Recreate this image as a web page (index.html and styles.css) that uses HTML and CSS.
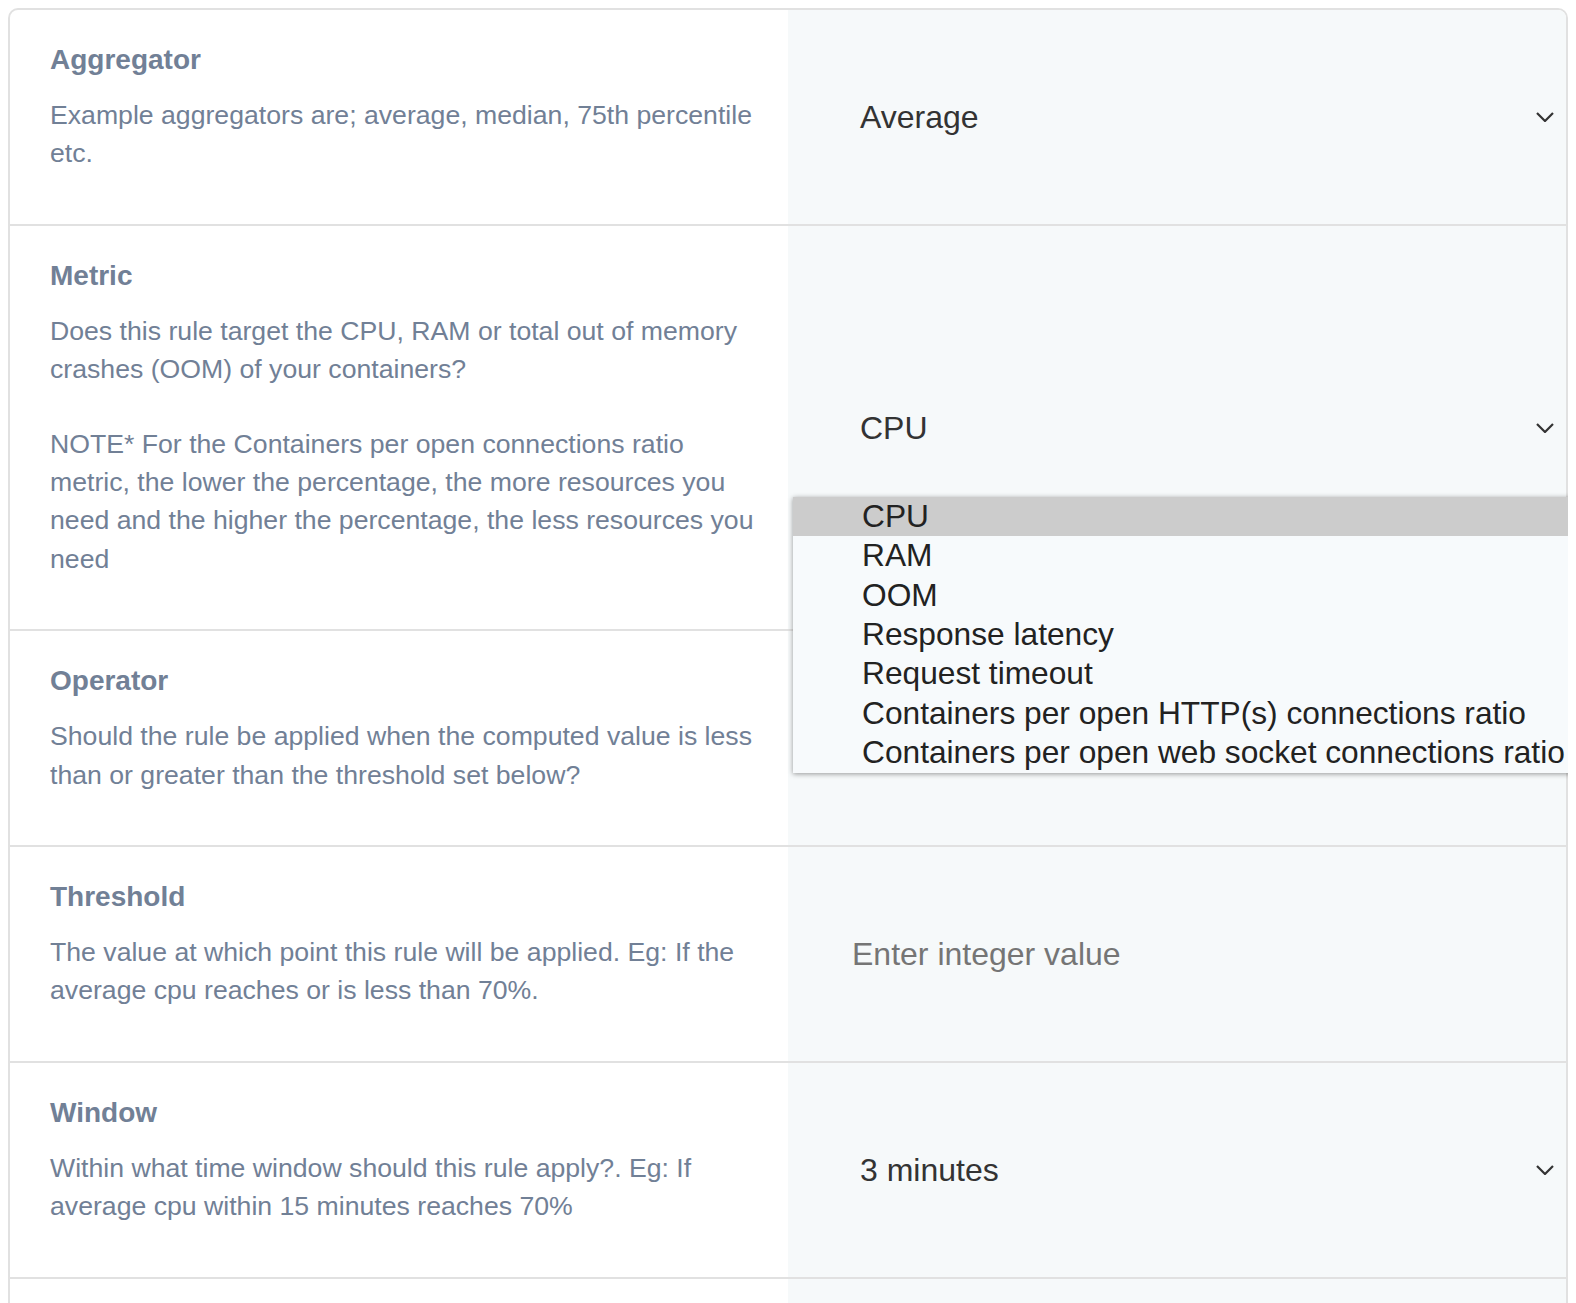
FILE: index.html
```html
<!DOCTYPE html>
<html lang="en">
<head>
<meta charset="utf-8">
<title>Scaling rule</title>
<link rel="stylesheet" href="styles.css">
</head>
<body>
<div class="card">
  <div class="row">
    <div class="info">
      <div class="label">Aggregator</div>
      <p class="desc">Example aggregators are; average, median, 75th percentile etc.</p>
    </div>
    <div class="control first">
      <div class="select"><span>Average</span><svg class="chev" width="18" height="10" viewBox="0 0 18 10"><path d="M1 1 L9 9 L17 1" fill="none" stroke="#333" stroke-width="2.2"/></svg></div>
    </div>
  </div>
  <div class="row">
    <div class="info">
      <div class="label">Metric</div>
      <p class="desc">Does this rule target the CPU, RAM or total out of memory crashes (OOM) of your containers?</p>
      <p class="desc note">NOTE* For the Containers per open connections ratio metric, the lower the percentage, the more resources you need and the higher the percentage, the less resources you need</p>
    </div>
    <div class="control">
      <div class="select"><span>CPU</span><svg class="chev" width="18" height="10" viewBox="0 0 18 10"><path d="M1 1 L9 9 L17 1" fill="none" stroke="#333" stroke-width="2.2"/></svg></div>
      <ul class="popup">
        <li class="active">CPU</li>
        <li>RAM</li>
        <li>OOM</li>
        <li>Response latency</li>
        <li>Request timeout</li>
        <li>Containers per open HTTP(s) connections ratio</li>
        <li>Containers per open web socket connections ratio</li>
      </ul>
    </div>
  </div>
  <div class="row">
    <div class="info">
      <div class="label">Operator</div>
      <p class="desc">Should the rule be applied when the computed value is less than or greater than the threshold set below?</p>
    </div>
    <div class="control"></div>
  </div>
  <div class="row">
    <div class="info">
      <div class="label">Threshold</div>
      <p class="desc">The value at which point this rule will be applied. Eg: If the average cpu reaches or is less than 70%.</p>
    </div>
    <div class="control">
      <input class="input" type="text" placeholder="Enter integer value">
    </div>
  </div>
  <div class="row">
    <div class="info">
      <div class="label">Window</div>
      <p class="desc">Within what time window should this rule apply?. Eg: If average cpu within 15 minutes reaches 70%</p>
    </div>
    <div class="control">
      <div class="select"><span>3 minutes</span><svg class="chev" width="18" height="10" viewBox="0 0 18 10"><path d="M1 1 L9 9 L17 1" fill="none" stroke="#333" stroke-width="2.2"/></svg></div>
    </div>
  </div>
  <div class="row last">
    <div class="info"></div>
    <div class="control"></div>
  </div>
</div>
</body>
</html>
```

FILE: styles.css
```css
* { box-sizing: border-box; }

html { overflow: hidden; }

body {
  margin: 8px;
  background: #ffffff;
  font-family: "Liberation Sans", Arial, sans-serif;
}

.card {
  border: 2px solid #e1e1e1;
  border-radius: 10px;
  background: #ffffff;
}

.row {
  display: grid;
  grid-template-columns: 1fr 1fr;
  border-bottom: 2px solid #e1e1e1;
}

.row.last {
  min-height: 215px;
  border-bottom: none;
}

.info {
  padding: 29px 26px 51px 40px;
}

.label {
  font-size: 28px;
  line-height: 42px;
  font-weight: bold;
  color: #718096;
}

.desc {
  margin: 15px 0 0 0;
  font-size: 26.65px;
  line-height: 38.4px;
  color: #718096;
}

.desc.note {
  margin-top: 36px;
}

.control {
  position: relative;
  display: flex;
  align-items: center;
  padding: 0 12px 0 5px;
  background: #f6f9fa;
}

.control.first {
  border-top-right-radius: 8px;
}

.select {
  flex: 1;
  display: flex;
  align-items: center;
  justify-content: space-between;
  padding-left: 67px;
  font-size: 32px;
  line-height: 40px;
  color: #333333;
}

.chev {
  display: block;
}

.input {
  flex: 1;
  border: none;
  background: transparent;
  padding: 0 0 0 59px;
  font-family: "Liberation Sans", Arial, sans-serif;
  font-size: 32px;
  line-height: 40px;
  color: #333333;
  outline: none;
}

.input::placeholder {
  color: #757575;
}

.popup {
  position: absolute;
  top: 271px;
  left: 5px;
  width: 783px;
  margin: 0;
  padding: 0;
  list-style: none;
  background: #f7fafc;
  box-shadow: 0 1px 5px rgba(0, 0, 0, 0.4);
  z-index: 5;
}

.popup li {
  padding-left: 69px;
  font-size: 31.7px;
  line-height: 39.4px;
  color: #222222;
  white-space: nowrap;
}

.popup li.active {
  background: #cccccc;
}
```
